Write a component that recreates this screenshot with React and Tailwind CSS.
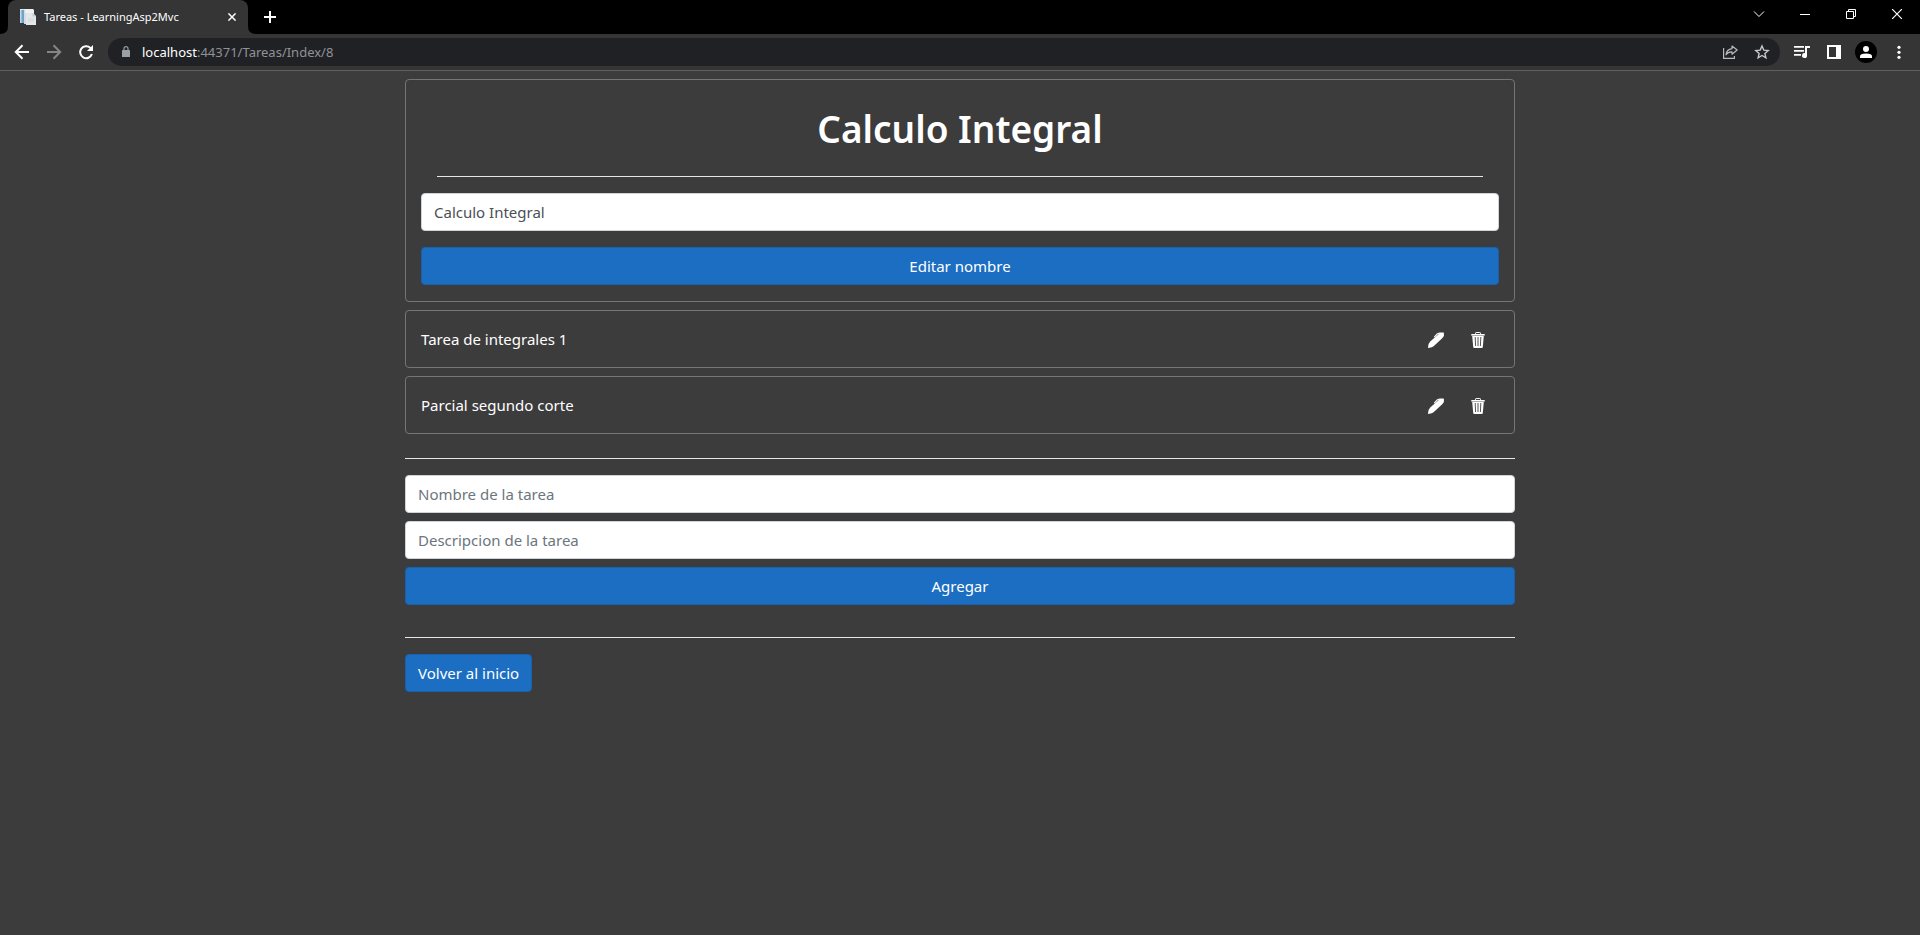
import React from "react";

const primaryButton =
  "h-[38px] rounded border border-[#1861ac] bg-[#1b6ec2] px-3 text-[15px] leading-6 text-white";
const textInput =
  "h-[38px] w-full rounded border border-[#ced4da] bg-white px-3 text-[15px] leading-6 text-[#495057] placeholder:text-[#6c757d]";

const tasks = ["Tarea de integrales 1", "Parcial segundo corte"];

function PageIcon() {
  return (
    <svg className="size-4 shrink-0" viewBox="0 0 16 16">
      <path d="M0 0h12v14H0z" fill="#dfe6ea" />
      <path d="M0 1h2v13H0z" fill="#c3d9e8" />
      <path d="M1.5 1h3v13h-3z" fill="#6ba4cd" />
      <path d="M4.5 0H13L14 1V8H4.5z" fill="#eef1f2" />
      <path d="M6 4h7l3 3v9H6z" fill="#e4e7ea" />
      <path d="M4 14V4H6V15H4z" fill="#d5dde2" />
      <path d="M12.5 4v3.5H16z" fill="#c3ccd4" />
      <path d="M8 10h6M8 12h6" stroke="#cfd6db" />
    </svg>
  );
}

function PencilIcon() {
  return (
    <svg className="size-4" viewBox="0 0 16 16" fill="#fff">
      <path d="M11.5 1.2L13.2 0.4H15.5L15.9 0.9V4L14.2 6.2L5.6 14.2L3.8 15.2L0.3 15.9L0 15.5L0.6 12L2.2 9.6L10.2 2.4z" />
      <path d="M6.2 5.2L9.4 1.8L12.6 0.8" fill="none" stroke="#fff" strokeWidth="1.1" />
    </svg>
  );
}

function TrashIcon() {
  return (
    <svg className="size-4" viewBox="0 0 16 16" fill="none">
      <path d="M5.5 2.5V1.2Q5.5 0.5 6.2 0.5H9.8Q10.5 0.5 10.5 1.2V2.5" stroke="#fff" />
      <path d="M1.3 2H14.7V3.6H1.3z" fill="#fff" />
      <path d="M2.2 4H13.8L12.8 15Q12.7 16 11.7 16H4.3Q3.3 16 3.2 15z" fill="#fff" />
      <path d="M5.2 5L5.6 14M8 5V14M10.8 5L10.4 14" stroke="#555" strokeWidth="1" />
    </svg>
  );
}

function TabStrip() {
  return (
    <div className="flex h-[34px] items-stretch bg-black">
      <div className="flex w-2 items-end">
        <svg className="size-2" viewBox="0 0 8 8">
          <path d="M8 0V8H0Q8 8 8 0z" fill="#353535" />
        </svg>
      </div>
      <div className="flex w-60 items-center rounded-t-lg bg-[#353535] pl-3 pr-2">
        <PageIcon />
        <span className="ml-2 flex-1 whitespace-nowrap text-[11px] leading-4 text-white">
          Tareas - LearningAsp2Mvc
        </span>
        <button aria-label="Cerrar pestaña" className="flex size-4 items-center justify-center">
          <svg className="size-2" viewBox="0 0 8 8" stroke="#fff" strokeWidth="1.5">
            <path d="M0.4 0.4L7.6 7.6M7.6 0.4L0.4 7.6" />
          </svg>
        </button>
      </div>
      <div className="flex w-2 items-end">
        <svg className="size-2" viewBox="0 0 8 8">
          <path d="M0 0V8H8Q0 8 0 0z" fill="#353535" />
        </svg>
      </div>
      <button aria-label="Nueva pestaña" className="flex w-7 items-center justify-center">
        <svg className="size-3" viewBox="0 0 12 12" stroke="#fff" strokeWidth="2">
          <path d="M6 0V12M0 6H12" />
        </svg>
      </button>
      <div className="ml-auto flex h-7 items-stretch">
        <button aria-label="Buscar pestañas" className="flex w-[46px] items-center justify-center">
          <svg className="h-2.5 w-3" viewBox="0 0 12 10" fill="none" stroke="#fff">
            <path d="M1 2.5L6 7.5L11 2.5" />
          </svg>
        </button>
        <button aria-label="Minimizar" className="flex w-[46px] items-center justify-center">
          <svg className="size-2.5" viewBox="0 0 10 10" stroke="#fff">
            <path d="M0 5.5H10" />
          </svg>
        </button>
        <button aria-label="Restaurar" className="flex w-[46px] items-center justify-center">
          <svg className="size-2.5" viewBox="0 0 10 10" fill="none" stroke="#fff">
            <path d="M0.5 2.5H7.5V9.5H0.5zM2.5 2.5V0.5H9.5V7.5H7.5" />
          </svg>
        </button>
        <button aria-label="Cerrar" className="flex w-[46px] items-center justify-center">
          <svg className="size-2.5" viewBox="0 0 10 10" stroke="#fff" strokeWidth="1.2">
            <path d="M0 0L10 10M10 0L0 10" />
          </svg>
        </button>
      </div>
    </div>
  );
}

function Toolbar() {
  return (
    <div className="flex h-[37px] items-center border-b border-[#5f6060] bg-[#353535] pl-3.5 pr-[11px]">
      <div className="flex w-[94px] gap-4">
        <button aria-label="Atrás">
          <svg className="size-4" viewBox="0 0 16 16" fill="none" stroke="#fff" strokeWidth="2">
            <path d="M15 8H2M8.5 1.3L1.8 8L8.5 14.7" />
          </svg>
        </button>
        <button aria-label="Adelante">
          <svg className="size-4" viewBox="0 0 16 16" fill="none" stroke="#868686" strokeWidth="2">
            <path d="M1 8H14M7.5 1.3L14.2 8L7.5 14.7" />
          </svg>
        </button>
        <button aria-label="Recargar">
          <svg className="size-4" viewBox="0 0 16 16" fill="none" stroke="#fff" strokeWidth="2">
            <path d="M13.9 10A6 6 0 1 1 12.4 3.9L13.4 5" />
            <path d="M15 1V7H9z" fill="#fff" stroke="none" />
          </svg>
        </button>
      </div>
      <div className="flex h-7 flex-1 items-center rounded-full bg-[#202124] pl-3.5 pr-2.5">
        <svg className="h-3 w-2 shrink-0" viewBox="0 0 8 12">
          <path d="M0 4.5Q0 4 .6 4H7.4Q8 4 8 4.5V10.4Q8 11 7.4 11H.6Q0 11 0 10.4z" fill="#9aa0a6" />
          <path d="M2 4.3V2.6A2 2 0 0 1 6 2.6V4.3" fill="none" stroke="#9aa0a6" strokeWidth="1.2" />
        </svg>
        <span className="ml-3 flex-1 text-[13px] leading-5 text-[#8f9397]">
          <span className="text-white">localhost</span>:44371/Tareas/Index/8
        </span>
        <button aria-label="Compartir" className="mr-4">
          <svg className="size-4" viewBox="0 0 16 16" fill="none" stroke="#b8b9ba" strokeWidth="1.2">
            <path d="M1.6 4V14.4H12.4V12" />
            <path d="M10 2L15.2 6L10 10.2V7.8Q6 7.6 4 10.8Q4.6 5.4 10 4.6z" strokeLinejoin="round" />
          </svg>
        </button>
        <button aria-label="Agregar a marcadores">
          <svg className="size-4" viewBox="0 0 16 16" fill="none" stroke="#c7c8c9" strokeWidth="1.4">
            <path d="M8 2L9.8 6.1L14.2 6.5L10.9 9.4L11.9 13.8L8 11.5L4.1 13.8L5.1 9.4L1.8 6.5L6.2 6.1z" />
          </svg>
        </button>
      </div>
      <div className="ml-3.5 flex items-center">
        <button aria-label="Control multimedia" className="mr-[17px]">
          <svg className="h-4 w-4" viewBox="0 0 16 16" fill="#fff">
            <path d="M0 2H10V3.7H0zM0 6H10V7.7H0zM0 10H7V11.7H0z" />
            <path d="M11 2H16V4H13V11.4A2.5 2.5 0 1 1 11 9.1z" />
          </svg>
        </button>
        <button aria-label="Panel lateral" className="mr-3.5">
          <svg className="size-3.5" viewBox="0 0 14 14">
            <path d="M0 0H14V14H0zM2 2V12H9V2z" fill="#fff" fillRule="evenodd" />
          </svg>
        </button>
        <button aria-label="Perfil" className="mr-3">
          <svg className="size-[22px]" viewBox="0 0 22 22">
            <circle cx="11" cy="11" r="11" fill="#000" />
            <circle cx="11" cy="8" r="3" fill="#fff" />
            <path d="M5 17V15.2Q5 12.4 11 12.4T17 15.2V17z" fill="#fff" />
          </svg>
        </button>
        <button aria-label="Menú">
          <svg className="h-4 w-5" viewBox="0 0 20 16" fill="#fff">
            <circle cx="10" cy="3.3" r="1.6" />
            <circle cx="10" cy="8.3" r="1.6" />
            <circle cx="10" cy="13.3" r="1.6" />
          </svg>
        </button>
      </div>
    </div>
  );
}

export default function App() {
  return (
    <div className="min-h-screen bg-[#3c3c3c] font-['Noto_Sans','Open_Sans',sans-serif] text-white">
      <header>
        <TabStrip />
        <Toolbar />
      </header>
      <main className="mx-auto max-w-[1140px] px-[15px] pt-2 pb-8">
        <section className="rounded border border-[#757575] px-[15px] pt-6 pb-4">
          <h1 className="text-center text-[37px] font-semibold leading-[50px]">Calculo Integral</h1>
          <hr className="mx-4 mt-[22px] mb-4 border-[#e6e6e6]" />
          <form onSubmit={(e) => e.preventDefault()}>
            <input aria-label="Nombre" className={textInput} defaultValue="Calculo Integral" />
            <button className={`${primaryButton} mt-4 block w-full`}>Editar nombre</button>
          </form>
        </section>
        <ul>
          {tasks.map((task) => (
            <li
              key={task}
              className="mt-2 flex h-[58px] items-center rounded border border-[#757575] pl-[15px] pr-7"
            >
              <span className="flex-1 text-[15px] leading-6">{task}</span>
              <div className="flex gap-[26px] pt-0.5">
                <button aria-label={`Editar ${task}`}>
                  <PencilIcon />
                </button>
                <button aria-label={`Eliminar ${task}`}>
                  <TrashIcon />
                </button>
              </div>
            </li>
          ))}
        </ul>
        <hr className="mt-6 mb-4 border-[#e6e6e6]" />
        <form className="flex flex-col gap-2" onSubmit={(e) => e.preventDefault()}>
          <input aria-label="Nombre de la tarea" className={textInput} placeholder="Nombre de la tarea" />
          <input
            aria-label="Descripcion de la tarea"
            className={textInput}
            placeholder="Descripcion de la tarea"
          />
          <button className={primaryButton}>Agregar</button>
        </form>
        <hr className="mt-8 mb-4 border-[#e6e6e6]" />
        <a href="#inicio" className={`${primaryButton} inline-flex items-center`}>
          Volver al inicio
        </a>
      </main>
    </div>
  );
}
